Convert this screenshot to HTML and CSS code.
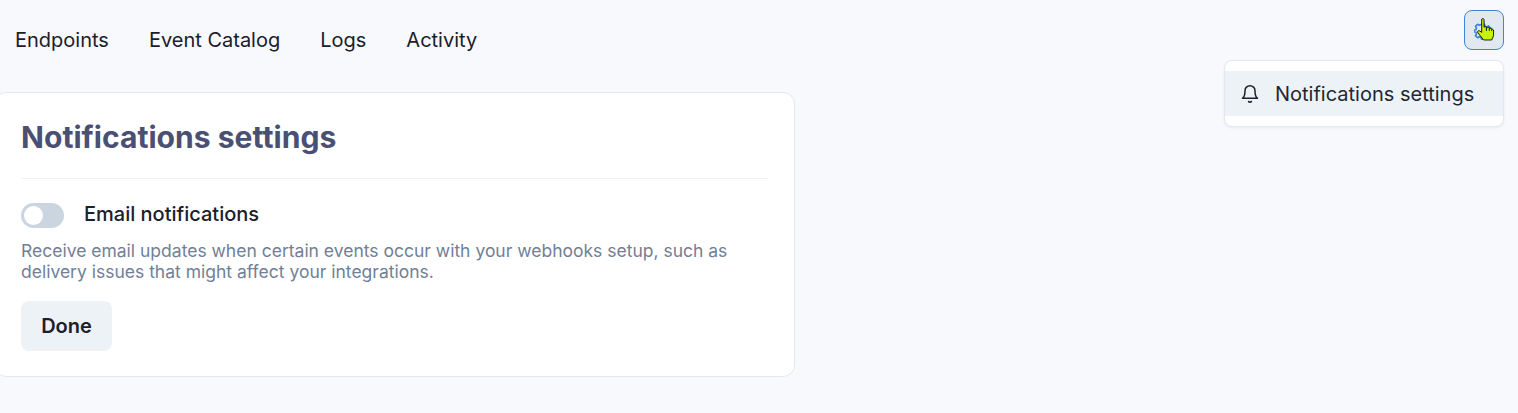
FILE: index.html
```html
<!DOCTYPE html>
<html lang="en">

<head>
    <meta charset="UTF-8">
    <meta name="viewport" content="width=device-width, initial-scale=1.0">
    <title>Notifications settings</title>
    <link rel="stylesheet" href="styles.css">
</head>

<body>
    <header class="topbar">
        <nav class="tabs">
            <a href="#">Endpoints</a>
            <a href="#">Event Catalog</a>
            <a href="#">Logs</a>
            <a href="#">Activity</a>
        </nav>
        <button class="gear-btn" aria-label="Settings">
            <svg class="gear" viewBox="0 0 24 24" width="18" height="18" fill="none" stroke="#3b82d6" stroke-width="2.200" stroke-linejoin="round">
                <path d="M10 3h4l.6 2.600 2.300 1 2.300-1.400 2.800 2.800-1.400 2.300 1 2.300L24 13l-2.600.6-1 2.300 1.400 2.300-2.800 2.800-2.300-1.400-2.300 1L14 23h-4l-.6-2.400-2.300-1-2.300 1.400L2 18.200l1.400-2.300-1-2.300L0 13v-2l2.400-.6 1-2.300L2 5.800 4.800 3l2.300 1.400 2.300-1z"/>
            </svg>
            <svg class="cursor" viewBox="0 0 20 26" width="19" height="26">
                <path d="M6 1.500c1-1 2.500-.5 2.500 1V10l1-.5 1.500.3 1 .7 1.500-.2 1.300.9 1.300-.1L18.500 13v6l-2 4.500H8L2 16c-1-1.500.5-3 2-2l2 1.500z" fill="#c6f400" stroke="#111" stroke-width="1" stroke-linejoin="round"/>
                <path d="M11 10v4M14 11v3M16.500 12v2" stroke="#111" stroke-width="1" fill="none"/>
            </svg>
        </button>
        <div class="menu">
            <a href="#" class="menu-item">
                <svg viewBox="0 0 24 24" width="20" height="20" fill="none" stroke="#1a202c" stroke-width="1.800" stroke-linecap="round" stroke-linejoin="round">
                    <path d="M18 8a6 6 0 0 0-12 0c0 7-3 9-3 9h18s-3-2-3-9"/>
                    <path d="M13.700 21a2 2 0 0 1-3.400 0"/>
                </svg>
                <span>Notifications settings</span>
            </a>
        </div>
    </header>

    <section class="card">
        <h1>Notifications settings</h1>
        <div class="toggle-row">
            <span class="toggle"><span class="knob"></span></span>
            <label>Email notifications</label>
        </div>
        <p class="help">Receive email updates when certain events occur with your webhooks setup, such as delivery issues that might affect your integrations.</p>
        <button class="done">Done</button>
    </section>
</body>

</html>
```

FILE: styles.css
```css
* {
    margin: 0;
    padding: 0;
    box-sizing: border-box;
}

body {
    font-family: 'Inter', 'Liberation Sans', sans-serif;
    background: #f7f9fc;
    color: #1a202c;
    overflow: hidden;
}

.topbar {
    position: relative;
    display: flex;
    justify-content: space-between;
    height: 92px;
    padding: 10px 14px 0 15px;
}

.tabs {
    display: flex;
    gap: 40px;
    height: 60px;
    align-items: center;
}

.tabs a {
    font-size: 20px;
    color: #1a202c;
    text-decoration: none;
}

.gear-btn {
    position: relative;
    width: 40px;
    height: 40px;
    display: flex;
    align-items: center;
    justify-content: center;
    background: #e2e8f0;
    border: 1.500px solid #3b86d6;
    border-radius: 8px;
}

.gear {
    margin-top: 2px;
    margin-right: 3px;
}

.cursor {
    position: absolute;
    top: 6px;
    left: 11px;
}

.menu {
    position: absolute;
    top: 60px;
    right: 14px;
    width: 280px;
    height: 67px;
    padding: 10px 0;
    background: #fff;
    border: 1px solid #e2e8f0;
    border-radius: 8px;
    box-shadow: 0 1px 3px rgba(0, 0, 0, 0.06);
}

.menu-item {
    display: flex;
    align-items: center;
    gap: 15px;
    height: 45px;
    padding: 0 15px;
    background: #edf2f7;
    font-size: 20px;
    color: #1f2733;
    text-decoration: none;
}

.card {
    width: 801px;
    height: 285px;
    margin-left: -6px;
    padding: 26px 26px 0 26px;
    background: #fff;
    border: 1px solid #e2e8f0;
    border-radius: 12px;
}

h1 {
    height: 60px;
    font-size: 30.100px;
    line-height: 36px;
    font-weight: 700;
    color: #4a5073;
    border-bottom: 1px solid #edf2f7;
}

.toggle-row {
    display: flex;
    align-items: center;
    gap: 20px;
    margin-top: 24px;
    height: 25px;
}

.toggle {
    display: block;
    width: 43px;
    height: 25px;
    padding: 3px;
    background: #cbd5e0;
    border-radius: 13px;
}

.knob {
    display: block;
    width: 19px;
    height: 19px;
    background: #fff;
    border-radius: 50%;
}

label {
    font-size: 20px;
    font-weight: 500;
    line-height: 24px;
    margin-top: -3px;
}

.help {
    margin-top: 12px;
    font-size: 17.500px;
    line-height: 21px;
    color: #718096;
}

.done {
    display: block;
    width: 91px;
    height: 50px;
    margin-top: 19px;
    background: #edf2f7;
    border: none;
    border-radius: 8px;
    font-family: inherit;
    font-size: 20px;
    font-weight: 600;
    color: #1a202c;
}
```
